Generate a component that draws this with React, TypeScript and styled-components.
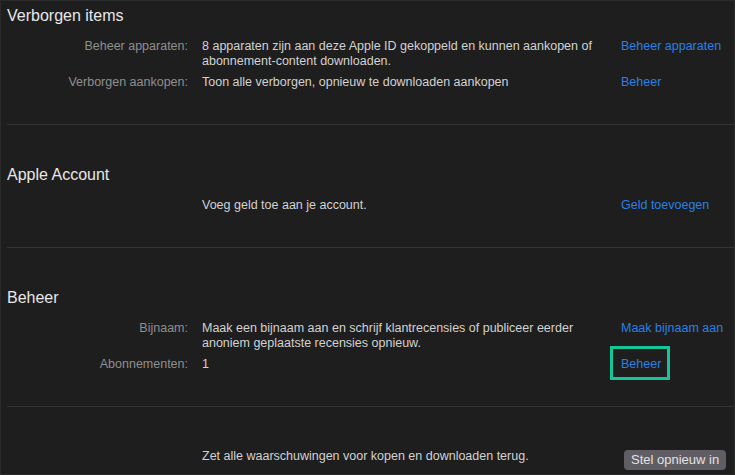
import styled, { createGlobalStyle } from "styled-components";

const GlobalStyle = createGlobalStyle`
  html, body {
    margin: 0;
    padding: 0;
    background: #1e1e1e;
  }
  body {
    font-family: "Liberation Sans", Arial, sans-serif;
    -webkit-font-smoothing: antialiased;
  }
`;

const Page = styled.div`
  box-sizing: border-box;
  width: 735px;
  height: 475px;
  overflow: hidden;
  background: #1e1e1e;
  border: 1px solid #2b2b2b;
  padding-left: 6px;
`;

const Section = styled.section<{ $first?: boolean; $last?: boolean; $top?: number }>`
  padding-top: ${(p) => (p.$first ? 5 : p.$top ?? 40)}px;
  padding-bottom: 34px;
  border-bottom: ${(p) => (p.$last ? "none" : "1px solid #353535")};
`;

const Heading = styled.h2`
  margin: 0 0 13px;
  font-size: 16px;
  line-height: 20px;
  font-weight: 400;
  color: #e8e8e8;
`;

const Rows = styled.div`
  display: grid;
  grid-template-columns: 181px 405px 1fr;
  column-gap: 14px;
  row-gap: 6px;
  font-size: 12.5px;
  line-height: 15px;
`;

const Label = styled.div`
  text-align: right;
  color: #8f8f8f;
`;

const Value = styled.div`
  color: #d2d2d2;
`;

const Action = styled.div`
  white-space: nowrap;
`;

const Link = styled.a<{ $highlight?: boolean }>`
  position: relative;
  color: #2a80e4;
  text-decoration: none;
  cursor: pointer;

  ${(p) =>
    p.$highlight &&
    `
    &::after {
      content: "";
      position: absolute;
      left: -11px;
      right: -9px;
      top: -11px;
      bottom: -9px;
      border: 3px solid #14c59a;
    }
  `}
`;

const ResetButton = styled.button`
  margin: 1px 0 0 3px;
  height: 20px;
  padding: 0 7px;
  border: none;
  border-radius: 4px;
  background: #605e64;
  color: #e2e2e2;
  font-family: "Liberation Sans", Arial, sans-serif;
  font-size: 13px;
  line-height: 20px;
  white-space: nowrap;
`;

type Row = {
  label?: string;
  value: string;
  link?: string;
  highlight?: boolean;
};

const hidden: Row[] = [
  {
    label: "Beheer apparaten:",
    value:
      "8 apparaten zijn aan deze Apple ID gekoppeld en kunnen aankopen of abonnement-content downloaden.",
    link: "Beheer apparaten",
  },
  {
    label: "Verborgen aankopen:",
    value: "Toon alle verborgen, opnieuw te downloaden aankopen",
    link: "Beheer",
  },
];

const account: Row[] = [
  { value: "Voeg geld toe aan je account.", link: "Geld toevoegen" },
];

const manage: Row[] = [
  {
    label: "Bijnaam:",
    value:
      "Maak een bijnaam aan en schrijf klantrecensies of publiceer eerder anoniem geplaatste recensies opnieuw.",
    link: "Maak bijnaam aan",
  },
  { label: "Abonnementen:", value: "1", link: "Beheer", highlight: true },
];

function RowList({ rows }: { rows: Row[] }) {
  return (
    <Rows>
      {rows.map((row) => (
        <>
          <Label>{row.label}</Label>
          <Value>{row.value}</Value>
          <Action>
            {row.link && <Link $highlight={row.highlight}>{row.link}</Link>}
          </Action>
        </>
      ))}
    </Rows>
  );
}

export default function App() {
  return (
    <>
      <GlobalStyle />
      <Page>
        <Section $first>
          <Heading>Verborgen items</Heading>
          <RowList rows={hidden} />
        </Section>

        <Section>
          <Heading>Apple Account</Heading>
          <RowList rows={account} />
        </Section>

        <Section>
          <Heading>Beheer</Heading>
          <RowList rows={manage} />
        </Section>

        <Section $last $top={42}>
          <Rows>
            <Label />
            <Value>Zet alle waarschuwingen voor kopen en downloaden terug.</Value>
            <Action>
              <ResetButton>Stel opnieuw in</ResetButton>
            </Action>
          </Rows>
        </Section>
      </Page>
    </>
  );
}
